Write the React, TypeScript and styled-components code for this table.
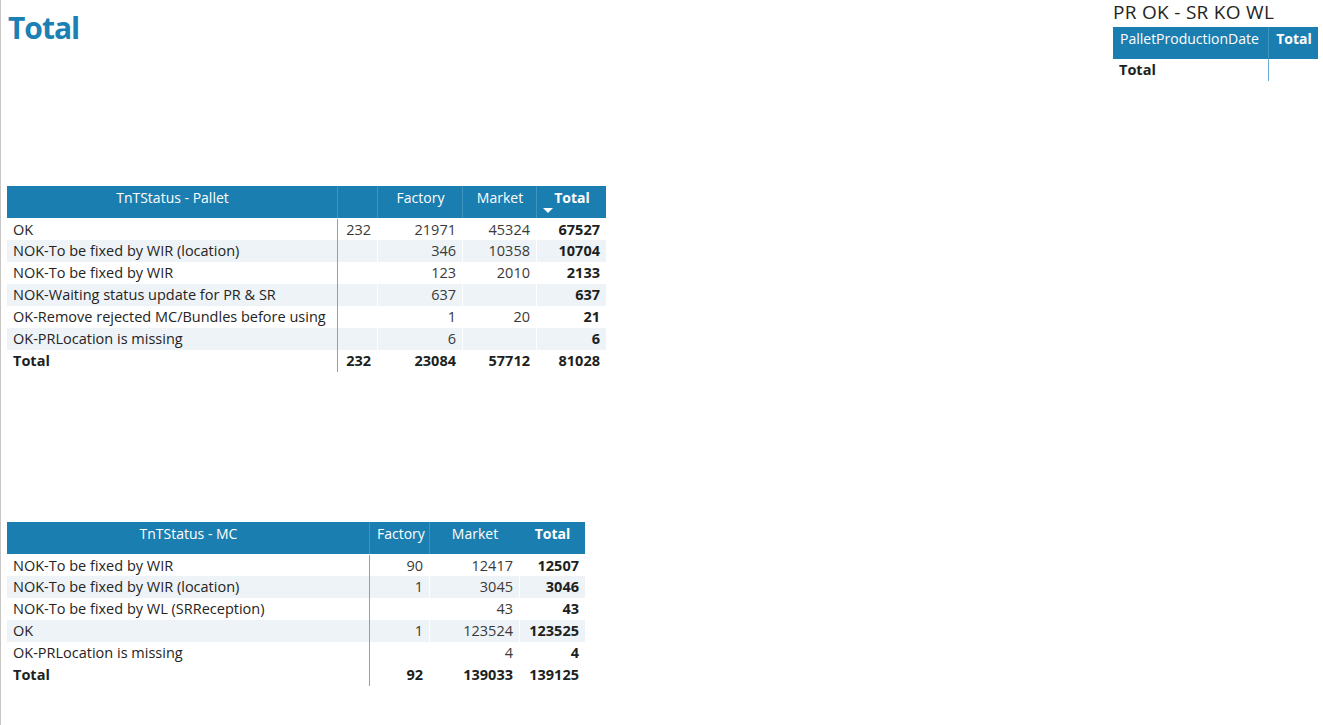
import React from "react";
import styled, { createGlobalStyle } from "styled-components";

const Global = createGlobalStyle`
  html, body { margin: 0; padding: 0; background: #ffffff; }
  body { font-family: "Open Sans", "Noto Sans", sans-serif; color: #252423; }
`;

const BLUE = "#1b7eb0";
const BAND = "#edf3f7";
const RULE = "#6aadd4";

const Page = styled.div`
  box-sizing: border-box;
  width: 1323px;
  height: 725px;
  border-left: 1px solid #c8c6c4;
  padding: 0 5px 0 6px;
  display: flex;
  flex-direction: column;
`;

const TopBar = styled.div`
  display: flex;
  justify-content: space-between;
  align-items: flex-start;
  height: 186px;
`;

const Title = styled.h1`
  margin: 9px 0 0 1px;
  font-size: 30px;
  line-height: 38px;
  font-weight: 700;
  color: #1c80b4;
  letter-spacing: -1px;
`;

const Side = styled.div`
  width: 205px;
  display: flex;
  flex-direction: column;
`;

const SideTitle = styled.div`
  font-size: 19px;
  line-height: 24px;
  height: 27px;
  color: #252423;
  letter-spacing: 0.3px;
`;

const Table = styled.div<{ $w: number }>`
  width: ${(p) => p.$w}px;
  font-size: 14.5px;
`;

const HeadRow = styled.div<{ $cols: string }>`
  display: grid;
  grid-template-columns: ${(p) => p.$cols};
  height: 32px;
  background: ${BLUE};
  color: #ffffff;
  font-size: 14px;
`;

const HeadCell = styled.div<{ $sep?: boolean; $bold?: boolean; $align?: string }>`
  position: relative;
  box-sizing: border-box;
  padding: 2px 6px 0 7px;
  line-height: 20px;
  text-align: ${(p) => p.$align || "center"};
  font-weight: ${(p) => (p.$bold ? 700 : 400)};
  border-left: ${(p) => (p.$sep ? "1px solid #3f93bf" : "none")};
  white-space: nowrap;
`;

const SortArrow = styled.span`
  position: absolute;
  left: 6px;
  top: 22px;
  width: 0;
  height: 0;
  border-left: 5px solid transparent;
  border-right: 5px solid transparent;
  border-top: 5px solid #ffffff;
`;

const Row = styled.div<{ $cols: string; $band?: boolean; $first?: boolean }>`
  display: grid;
  grid-template-columns: ${(p) => p.$cols};
  height: 22px;
  padding-top: ${(p) => (p.$first ? "1px" : "0")};
  box-sizing: border-box;
  background: ${(p) => (p.$band ? BAND : "#ffffff")};
`;

const Cell = styled.div<{ $num?: boolean; $bold?: boolean; $rule?: boolean; $sep?: boolean }>`
  box-sizing: border-box;
  padding: 0 6px;
  line-height: 22px;
  text-align: ${(p) => (p.$num ? "right" : "left")};
  font-weight: ${(p) => (p.$bold ? 700 : 400)};
  color: ${(p) => (p.$bold ? "#201f1e" : p.$num ? "#3b3a39" : "#252423")};
  border-left: ${(p) =>
    p.$rule ? `1px solid ${RULE}` : p.$sep ? "1px solid rgba(255,255,255,0.9)" : "none"};
  white-space: nowrap;
  overflow: hidden;
`;

const PalletSection = styled.div`
  margin-left: 0;
`;

const McSection = styled.div`
  margin-top: 150px;
`;

type Line = { label: string; vals: string[] };

const palletCols = "330px 40px 85px 74px 70px";
const palletRows: Line[] = [
  { label: "OK", vals: ["232", "21971", "45324", "67527"] },
  { label: "NOK-To be fixed by WIR (location)", vals: ["", "346", "10358", "10704"] },
  { label: "NOK-To be fixed by WIR", vals: ["", "123", "2010", "2133"] },
  { label: "NOK-Waiting status update for PR & SR", vals: ["", "637", "", "637"] },
  { label: "OK-Remove rejected MC/Bundles before using", vals: ["", "1", "20", "21"] },
  { label: "OK-PRLocation is missing", vals: ["", "6", "", "6"] },
];
const palletTotal = ["232", "23084", "57712", "81028"];

const mcCols = "362px 60px 90px 66px";
const mcRows: Line[] = [
  { label: "NOK-To be fixed by WIR", vals: ["90", "12417", "12507"] },
  { label: "NOK-To be fixed by WIR (location)", vals: ["1", "3045", "3046"] },
  { label: "NOK-To be fixed by WL (SRReception)", vals: ["", "43", "43"] },
  { label: "OK", vals: ["1", "123524", "123525"] },
  { label: "OK-PRLocation is missing", vals: ["", "4", "4"] },
];
const mcTotal = ["92", "139033", "139125"];

function DataRows({ cols, rows, total }: { cols: string; rows: Line[]; total: string[] }) {
  return (
    <>
      {rows.map((r, i) => (
        <Row key={r.label} $cols={cols} $band={i % 2 === 1} $first={i === 0}>
          <Cell>{r.label}</Cell>
          {r.vals.map((v, j) => (
            <Cell key={j} $num $rule={j === 0} $sep={j > 0} $bold={j === r.vals.length - 1}>
              {v}
            </Cell>
          ))}
        </Row>
      ))}
      <Row $cols={cols}>
        <Cell $bold>Total</Cell>
        {total.map((v, j) => (
          <Cell key={j} $num $bold $rule={j === 0}>
            {v}
          </Cell>
        ))}
      </Row>
    </>
  );
}

export default function App() {
  return (
    <>
      <Global />
      <Page>
        <TopBar>
          <Title>Total</Title>
          <Side>
            <SideTitle>PR OK - SR KO WL</SideTitle>
            <Table $w={205}>
              <HeadRow $cols="155px 50px">
                <HeadCell $align="left">PalletProductionDate</HeadCell>
                <HeadCell $sep $bold>Total</HeadCell>
              </HeadRow>
              <Row $cols="155px 50px">
                <Cell $bold>Total</Cell>
                <Cell $rule />
              </Row>
            </Table>
          </Side>
        </TopBar>

        <PalletSection>
          <Table $w={599}>
            <HeadRow $cols={palletCols}>
              <HeadCell>TnTStatus - Pallet</HeadCell>
              <HeadCell $sep />
              <HeadCell $sep>Factory</HeadCell>
              <HeadCell $sep>Market</HeadCell>
              <HeadCell $sep $bold>
                Total
                <SortArrow />
              </HeadCell>
            </HeadRow>
            <DataRows cols={palletCols} rows={palletRows} total={palletTotal} />
          </Table>
        </PalletSection>

        <McSection>
          <Table $w={578}>
            <HeadRow $cols={mcCols}>
              <HeadCell>TnTStatus - MC</HeadCell>
              <HeadCell $sep>Factory</HeadCell>
              <HeadCell $sep>Market</HeadCell>
              <HeadCell $bold>Total</HeadCell>
            </HeadRow>
            <DataRows cols={mcCols} rows={mcRows} total={mcTotal} />
          </Table>
        </McSection>
      </Page>
    </>
  );
}
